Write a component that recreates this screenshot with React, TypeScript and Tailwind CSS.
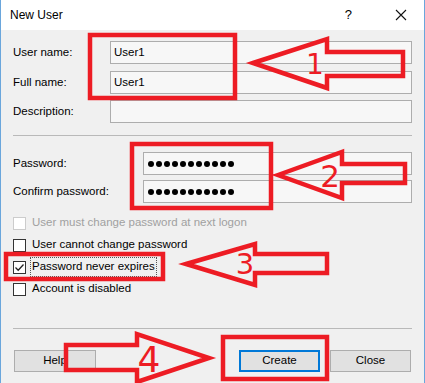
const RED = "#ed1c24";

function Field({ label, value, labelW = "w-[97px]", mask = false, className = "" }: { label: string; value?: string; labelW?: string; mask?: boolean; className?: string }) {
  return (
    <div className={`flex h-[23px] items-center ${className}`}>
      <div className={`${labelW} shrink-0`}>{label}</div>
      <div className="flex h-full flex-1 items-center border border-[#adadad] bg-[#f7f7f7] pl-[3px]">
        {mask ? (
          <div className="flex items-center gap-[2px] pl-[1px]">
            {Array.from({ length: 11 }).map((_, i) => (
              <span key={i} className="h-[6px] w-[6px] rounded-full bg-black" />
            ))}
          </div>
        ) : (
          <span>{value}</span>
        )}
      </div>
    </div>
  );
}

function Check({ label, checked = false, disabled = false, focused = false }: { label: string; checked?: boolean; disabled?: boolean; focused?: boolean }) {
  return (
    <div className="flex h-[22px] items-center">
      <span
        className={`flex h-[13px] w-[13px] shrink-0 items-center justify-center border bg-white ${
          disabled ? "border-[#cccccc]" : "border-[#333333]"
        }`}
      >
        {checked && (
          <svg width="11" height="11" viewBox="0 0 11 11">
            <path d="M1.5 5.5 L4.2 8.2 L9.5 2.5" fill="none" stroke="#222" strokeWidth="1.3" />
          </svg>
        )}
      </span>
      <span
        className={`ml-[4px] px-[1px] ${disabled ? "text-[#a0a0a0]" : "text-black"} ${
          focused ? "border border-dotted border-[#555]" : "border border-transparent"
        }`}
      >
        {label}
      </span>
    </div>
  );
}

function Overlay() {
  return (
    <svg className="pointer-events-none absolute left-[-1px] top-0" width="425" height="383" viewBox="0 0 425 383">
      <g fill="none" stroke={RED} strokeWidth="4.5" strokeLinejoin="miter">
        <rect x="90" y="35" width="145" height="63" />
        <rect x="132" y="144" width="139" height="64" />
        <rect x="6" y="254" width="157" height="25" />
        <rect x="223" y="337" width="104" height="42" />
        <polygon points="253,63 327,39 327,52 403,52 403,76 327,76 327,88" />
        <polygon points="278,175 342,152 342,164 405,164 405,183 342,183 342,198" />
        <polygon points="186,264 255,244 255,254 327,254 327,273 255,273 255,285" />
        <polygon points="66,345 137,345 137,334 209,358 137,382 137,370 66,370" />
      </g>
      <g fill={RED} fontFamily="'DejaVu Sans', sans-serif" textAnchor="middle">
        <text x="315" y="74" fontSize="28">1</text>
        <text x="330" y="187" fontSize="31">2</text>
        <text x="245" y="274" fontSize="29">3</text>
        <text x="149" y="372" fontSize="36">4</text>
      </g>
    </svg>
  );
}

export default function App() {
  return (
    <div className="relative h-[383px] w-[425px] overflow-hidden border-x border-[#6aa6dc] bg-[#f0f0f0] font-['Liberation_Sans',Arial,sans-serif] text-[11.5px] text-black">
      {/* Title bar */}
      <div className="flex h-[30px] items-center bg-white pl-[9px] pr-[17px]">
        <span className="text-[12px]">New User</span>
        <span className="ml-auto mr-[43px] text-[13px]">?</span>
        <svg width="12" height="12" viewBox="0 0 12 12">
          <path d="M1 1 L11 11 M11 1 L1 11" stroke="#111" strokeWidth="1.1" />
        </svg>
      </div>

      {/* Body */}
      <div className="flex flex-col px-[12px] pt-[11px]">
        <Field label="User name:" value="User1" />
        <Field label="Full name:" value="User1" className="mt-[7px]" />
        <Field label="Description:" className="mt-[6px]" />

        <div className="mt-[12px] h-px bg-[#b9b9b9]" />

        <Field label="Password:" labelW="w-[130px]" mask className="mt-[16px]" />
        <Field label="Confirm password:" labelW="w-[130px]" mask className="mt-[5px]" />

        <div className="mt-[9px] flex flex-col">
          <Check label="User must change password at next logon" disabled />
          <Check label="User cannot change password" />
          <Check label="Password never expires" checked focused />
          <Check label="Account is disabled" />
        </div>

        <div className="mt-[28px] h-px bg-[#b9b9b9]" />

        <div className="mt-[21px] flex items-center">
          <button className="ml-[1px] h-[22px] w-[82px] border border-[#adadad] bg-[#e1e1e1]">Help</button>
          <button className="ml-auto h-[22px] w-[81px] border-2 border-[#0078d7] bg-[#e1e1e1]">Create</button>
          <button className="ml-[10px] mr-[1px] h-[22px] w-[81px] border border-[#adadad] bg-[#e1e1e1]">Close</button>
        </div>
      </div>

      <Overlay />
    </div>
  );
}
